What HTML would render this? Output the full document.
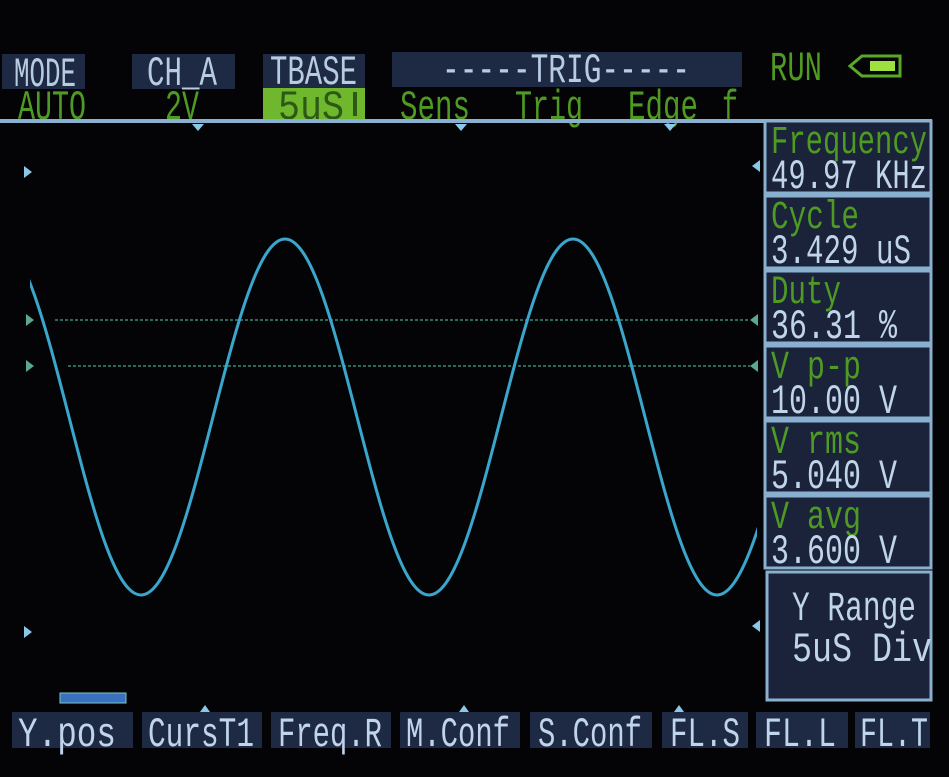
<!DOCTYPE html>
<html><head><meta charset="utf-8"><style>
html,body{margin:0;padding:0;background:#030305;}
svg{display:block}
text{font-family:"Liberation Mono",monospace;}
</style></head><body>
<svg width="949" height="777" viewBox="0 0 949 777" xmlns="http://www.w3.org/2000/svg">
<rect width="949" height="777" fill="#040407"/>
<g fill="#1e2a44">
<rect x="2" y="54" width="83" height="35"/>
<rect x="132" y="54" width="103" height="35"/>
<rect x="263" y="54" width="102" height="35"/>
<rect x="392" y="52" width="350" height="35"/>
</g>
<rect x="263" y="88" width="102" height="32" fill="#6fb82e"/>
<g fill="#b8cce0" font-size="42">
<text x="14" y="86" textLength="62" lengthAdjust="spacingAndGlyphs">MODE</text>
<text x="147" y="85" textLength="70" lengthAdjust="spacingAndGlyphs">CH_A</text>
<text x="270" y="84" textLength="87" lengthAdjust="spacingAndGlyphs">TBASE</text>
<text x="442" y="82" textLength="248" lengthAdjust="spacingAndGlyphs">-----TRIG-----</text>
</g>
<g fill="#4e9a22" font-size="42">
<text x="18" y="119" textLength="68" lengthAdjust="spacingAndGlyphs">AUTO</text>
<text x="165" y="119" textLength="34" lengthAdjust="spacingAndGlyphs">2V</text>
<text x="400" y="119" textLength="70" lengthAdjust="spacingAndGlyphs">Sens</text>
<text x="515" y="119" textLength="68" lengthAdjust="spacingAndGlyphs">Trig</text>
<text x="628" y="119" textLength="70" lengthAdjust="spacingAndGlyphs">Edge</text>
<text x="722" y="119" textLength="16" lengthAdjust="spacingAndGlyphs">f</text>
<text x="770" y="80" textLength="52" lengthAdjust="spacingAndGlyphs">RUN</text>
</g>
<text x="278" y="119" font-size="42" fill="#2c5a14" textLength="66" lengthAdjust="spacingAndGlyphs">5uS</text>
<rect x="353" y="92" width="4" height="24" fill="#2c5a14"/>
<path d="M862,56 H900 V76 H862 L850,66 Z" fill="none" stroke="#5aa82a" stroke-width="3"/>
<rect x="870" y="61" width="25" height="10" fill="#9ee040"/>
<rect x="0" y="119" width="932" height="4" fill="#8ab0d0"/>
<g fill="#8ac8e8">
<path d="M192,124 h12 l-6,7z"/><path d="M455,124 h12 l-6,7z"/><path d="M664,124 h12 l-6,7z"/>
<path d="M24,166 l8,6 l-8,6z"/><path d="M24,626 l8,6 l-8,6z"/>
<path d="M760,160 l-8,6 l8,6z"/><path d="M760,620 l-8,6 l8,6z"/>
</g>
<g fill="#5aa890">
<path d="M26,314 l8,6 l-8,6z"/><path d="M26,360 l8,6 l-8,6z"/>
<path d="M758,314 l-8,6 l8,6z"/><path d="M758,360 l-8,6 l8,6z"/>
</g>
<g stroke="#2a6a58" stroke-width="2" stroke-dasharray="3 2">
<line x1="55" y1="320" x2="750" y2="320"/>
<line x1="68" y1="366" x2="750" y2="366"/>
</g>
<clipPath id="c"><rect x="30" y="200" width="727" height="420"/></clipPath>
<path clip-path="url(#c)" fill="none" stroke="#3aa6cc" stroke-width="3" d="M-3,239 C23.1,239 45.5,325.7 69,417 C92.5,508.3 114.9,595 141,595 C167.1,595 189.5,508.3 213,417 C236.5,325.7 258.9,239 285,239 C311.1,239 333.5,325.7 357,417 C380.5,508.3 402.9,595 429,595 C455.1,595 477.5,508.3 501,417 C524.5,325.7 546.9,239 573,239 C599.1,239 621.5,325.7 645,417 C668.5,508.3 690.9,595 717,595 C743.1,595 765.5,508.3 789,417"/>
<g fill="#1a233a" stroke="#8ab0d0" stroke-width="3">
<rect x="765" y="121" width="166" height="72"/>
<rect x="765" y="196" width="166" height="72"/>
<rect x="765" y="271" width="166" height="72"/>
<rect x="765" y="346" width="166" height="72"/>
<rect x="765" y="421" width="166" height="72"/>
<rect x="765" y="496" width="166" height="72"/>
<rect x="767" y="572" width="164" height="128"/>
</g>
<g fill="#4e9a22" font-size="40">
<text x="771" y="153" textLength="156" lengthAdjust="spacingAndGlyphs">Frequency</text>
<text x="771" y="228" textLength="88" lengthAdjust="spacingAndGlyphs">Cycle</text>
<text x="771" y="303" textLength="70" lengthAdjust="spacingAndGlyphs">Duty</text>
<text x="771" y="378" textLength="90" lengthAdjust="spacingAndGlyphs">V p-p</text>
<text x="771" y="453" textLength="90" lengthAdjust="spacingAndGlyphs">V rms</text>
<text x="771" y="528" textLength="90" lengthAdjust="spacingAndGlyphs">V avg</text>
</g>
<g fill="#c0d4ea" font-size="42">
<text x="771" y="188" textLength="156" lengthAdjust="spacingAndGlyphs">49.97 KHz</text>
<text x="771" y="263" textLength="140" lengthAdjust="spacingAndGlyphs">3.429 uS</text>
<text x="771" y="338" textLength="126" lengthAdjust="spacingAndGlyphs">36.31 %</text>
<text x="771" y="413" textLength="126" lengthAdjust="spacingAndGlyphs">10.00 V</text>
<text x="771" y="488" textLength="126" lengthAdjust="spacingAndGlyphs">5.040 V</text>
<text x="771" y="563" textLength="126" lengthAdjust="spacingAndGlyphs">3.600 V</text>
<text x="792" y="620" textLength="124" lengthAdjust="spacingAndGlyphs">Y Range</text>
<text x="792" y="661" textLength="140" lengthAdjust="spacingAndGlyphs">5uS  Div</text>
</g>
<rect x="60" y="693" width="66" height="10" fill="#3a70c0" stroke="#7ac8c0" stroke-width="1"/>
<g fill="#1e2a44">
<rect x="12" y="712" width="121" height="36"/>
<rect x="142" y="712" width="120" height="36"/>
<rect x="271" y="712" width="120" height="36"/>
<rect x="400" y="712" width="120" height="36"/>
<rect x="530" y="712" width="122" height="36"/>
<rect x="662" y="712" width="86" height="36"/>
<rect x="756" y="712" width="92" height="36"/>
<rect x="855" y="712" width="75" height="36"/>
</g>
<g fill="#8ac8e8"><path d="M200,712 l5,-7 l5,7z"/><path d="M459,712 l5,-7 l5,7z"/><path d="M674,712 l5,-7 l5,7z"/></g>
<g fill="#c0d4ea" font-size="42">
<text x="18" y="746" textLength="98" lengthAdjust="spacingAndGlyphs">Y.pos</text>
<text x="148" y="746" textLength="106" lengthAdjust="spacingAndGlyphs">CursT1</text>
<text x="278" y="746" textLength="104" lengthAdjust="spacingAndGlyphs">Freq.R</text>
<text x="406" y="746" textLength="104" lengthAdjust="spacingAndGlyphs">M.Conf</text>
<text x="538" y="746" textLength="104" lengthAdjust="spacingAndGlyphs">S.Conf</text>
<text x="670" y="746" textLength="70" lengthAdjust="spacingAndGlyphs">FL.S</text>
<text x="764" y="746" textLength="72" lengthAdjust="spacingAndGlyphs">FL.L</text>
<text x="860" y="746" textLength="68" lengthAdjust="spacingAndGlyphs">FL.T</text>
</g>
</svg>
</body></html>
